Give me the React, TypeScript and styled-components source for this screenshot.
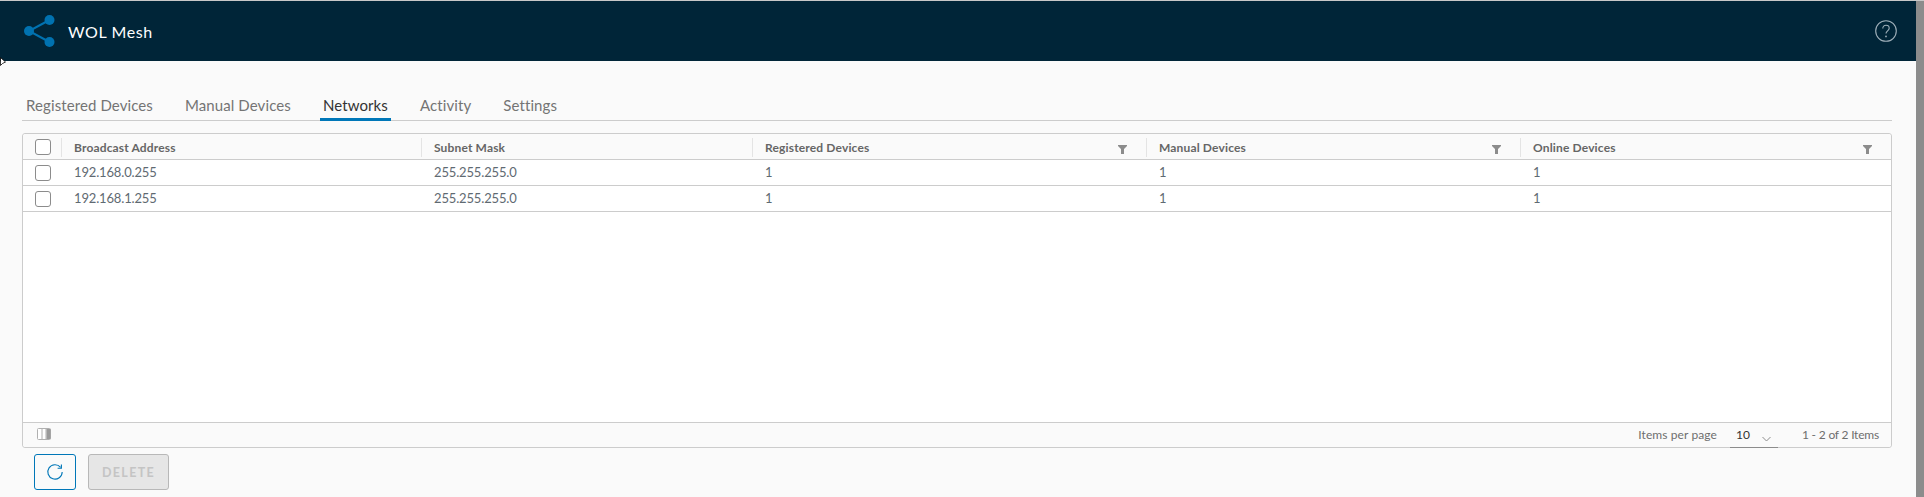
import React from 'react'
import styled, { createGlobalStyle } from 'styled-components'

const GlobalStyle = createGlobalStyle`
  html, body {
    margin: 0;
    padding: 0;
    background: #fafafa;
    overflow: hidden;
  }
  * {
    box-sizing: border-box;
  }
`

const Page = styled.div`
  position: relative;
  display: flex;
  flex-direction: column;
  width: 1924px;
  height: 497px;
  padding: 0 8px 0 0;
  background: #fafafa;
  border-top: 1px solid #c8c8c8;
  font-family: Lato, "Open Sans", sans-serif;
  color: #565656;
  box-shadow: inset -8px 0 0 #8c8c8c;
`

// HEADER

const Header = styled.header`
  display: flex;
  align-items: center;
  justify-content: space-between;
  height: 60px;
  padding: 0 19px 0 24px;
  background: #002538;
`

const Brand = styled.div`
  display: flex;
  align-items: center;
  gap: 13px;
  color: #fff;
  font-size: 16px;
  letter-spacing: 0.6px;
`

const Cursor = styled.svg`
  position: absolute;
  left: 0;
  top: 56px;
`

// TABS

const Main = styled.main`
  display: flex;
  flex-direction: column;
  padding: 0 24px 0 22px;
`

const Tabs = styled.nav`
  display: flex;
  align-items: flex-end;
  gap: 32px;
  height: 60px;
  padding-left: 4px;
  border-bottom: 1px solid #ccc;
`

const Tab = styled.div<{ $active?: boolean }>`
  height: 30px;
  margin: 0 ${p => (p.$active ? '-3px' : '0')} -1px;
  padding: 0 ${p => (p.$active ? '3px' : '0')};
  line-height: 28px;
  font-size: 15px;
  letter-spacing: 0.1px;
  color: ${p => (p.$active ? '#333' : '#747474')};
  border-bottom: 3px solid ${p => (p.$active ? '#0077b8' : 'transparent')};
`

// TABLE

const Table = styled.div`
  display: flex;
  flex-direction: column;
  height: 315px;
  margin-top: 12px;
  background: #fff;
  border: 1px solid #ccc;
  border-radius: 3px;
`

const columns = '38px 360px 331px 394px 374px 1fr'

const HeadRow = styled.div`
  display: grid;
  grid-template-columns: ${columns};
  height: 26px;
  background: #fafafa;
  border-bottom: 1px solid #ccc;
  border-radius: 3px 3px 0 0;
`

const HeadCell = styled.div`
  display: flex;
  align-items: center;
  justify-content: space-between;
  margin: 4px 0 2px;
  padding: 0 19px 0 12px;
  border-left: 1px solid #e4e4e4;
  font-size: 12px;
  font-weight: 700;
  letter-spacing: 0.15px;
  color: #666;
`

const CheckCell = styled.div`
  display: flex;
  align-items: center;
  padding-left: 12px;
`

const Checkbox = styled.span`
  display: block;
  width: 16px;
  height: 16px;
  background: #fff;
  border: 1px solid #8c8c8c;
  border-radius: 3px;
`

const Row = styled.div`
  display: grid;
  grid-template-columns: ${columns};
  height: 26px;
  border-bottom: 1px solid #ccc;
`

const Cell = styled.div`
  display: flex;
  align-items: center;
  padding: 0 0 1px 13px;
  font-size: 13px;
  letter-spacing: -0.15px;
  color: #5f6a72;
`

const Spacer = styled.div`
  flex: 1;
`

const Footer = styled.div`
  display: flex;
  align-items: flex-start;
  justify-content: space-between;
  height: 25px;
  padding: 0 12px 0 14px;
  background: #fafafa;
  border-top: 1px solid #ccc;
  border-radius: 0 0 3px 3px;
  font-size: 12px;
  line-height: 23px;
  letter-spacing: 0.1px;
  color: #6e6e6e;
`

const Pager = styled.div`
  display: flex;
  align-items: flex-start;
`

const PageSelect = styled.div`
  display: flex;
  align-items: flex-start;
  justify-content: space-between;
  width: 48px;
  height: 25px;
  margin: 0 24px 0 13px;
  padding: 0 7px 0 6px;
  border-bottom: 1px solid #8c8c8c;
  color: #333;
`

const PageRange = styled.span`
  letter-spacing: -0.2px;
`

const Chevron = styled.svg`
  margin-top: 13px;
`

const ColumnToggle = styled.svg`
  margin-top: 5px;
`

// ACTIONS

const Actions = styled.div`
  display: flex;
  gap: 12px;
  margin: 6px 0 0 12px;
`

const IconButton = styled.button`
  display: flex;
  align-items: center;
  justify-content: center;
  width: 42px;
  height: 36px;
  padding: 0;
  background: transparent;
  border: 1px solid #0077b8;
  border-radius: 3px;
`

const DisabledButton = styled.button`
  width: 81px;
  height: 36px;
  padding: 0;
  background: #e6e6e6;
  border: 1px solid #b8b8b8;
  border-radius: 3px;
  font-family: inherit;
  font-size: 12.5px;
  font-weight: 700;
  letter-spacing: 1.3px;
  color: #c4c4c4;
`

const FilterMark = styled.svg`
  flex: none;
  margin-top: 4px;
`

const ShareIcon = () => (
  <svg width="31" height="32" viewBox="0 0 31 32">
    <path d="M25.5 5 5 16l20.5 11" fill="none" stroke="#0072b0" strokeWidth="2" />
    <circle cx="25.5" cy="5" r="5" fill="#0072b0" />
    <circle cx="5" cy="16" r="5" fill="#0072b0" />
    <circle cx="25.5" cy="27" r="5" fill="#0072b0" />
  </svg>
)

const HelpIcon = () => (
  <svg width="22" height="22" viewBox="0 0 22 22">
    <circle cx="11" cy="11" r="10.3" fill="none" stroke="#9fb0ba" strokeWidth="1.1" />
    <path d="M7.8 8.4c0-2 1.4-3.1 3.2-3.1s3.2 1.1 3.2 2.9c0 2.5-3.2 2.7-3.2 5.2" fill="none" stroke="#9fb0ba" strokeWidth="1.1" />
    <circle cx="11" cy="16.4" r="0.9" fill="#9fb0ba" />
  </svg>
)

const FilterIcon = () => (
  <FilterMark width="9" height="9" viewBox="0 0 9 9">
    <path d="M0 0h9v1L6 4v5H3V4L0 1z" fill="#8c8c8c" />
  </FilterMark>
)

const ColumnsIcon = () => (
  <ColumnToggle width="14" height="12" viewBox="0 0 14 12">
    <rect x="0.5" y="0.5" width="13" height="11" rx="1" fill="#fff" stroke="#b0b0b0" />
    <path d="M5 1v10M9 1v10" stroke="#b0b0b0" />
    <rect x="9.5" y="1" width="4" height="10" fill="#9a9a9a" />
  </ColumnToggle>
)

const RefreshIcon = () => (
  <svg width="18" height="18" viewBox="0 0 18 18">
    <path d="M14.6 4.4A7.2 7.2 0 1 0 16.2 9" fill="none" stroke="#0077b8" strokeWidth="1.1" />
    <path d="M15.4 1.4v3.8h-3.8" fill="none" stroke="#0077b8" strokeWidth="1.1" />
  </svg>
)

const ChevronIcon = () => (
  <Chevron width="9" height="6" viewBox="0 0 9 6">
    <path d="M.5 1l4 4 4-4" fill="none" stroke="#8c8c8c" strokeWidth="1" />
  </Chevron>
)

const rows = [
  { address: '192.168.0.255', mask: '255.255.255.0' },
  { address: '192.168.1.255', mask: '255.255.255.0' },
]

const tabNames = ['Registered Devices', 'Manual Devices', 'Networks', 'Activity', 'Settings']

export default function App() {
  return (
    <Page>
      <GlobalStyle />
      <Header>
        <Brand>
          <ShareIcon />
          WOL Mesh
        </Brand>
        <HelpIcon />
      </Header>
      <Cursor width="7" height="10" viewBox="0 0 7 10">
        <path d="M.5.5v8l2-2 3-1.5z" fill="#fff" stroke="#000" strokeWidth=".8" />
      </Cursor>
      <Main>
        <Tabs>
          {tabNames.map(name => (
            <Tab key={name} $active={name === 'Networks'}>{name}</Tab>
          ))}
        </Tabs>
        <Table>
          <HeadRow>
            <CheckCell><Checkbox /></CheckCell>
            <HeadCell>Broadcast Address</HeadCell>
            <HeadCell>Subnet Mask</HeadCell>
            <HeadCell>Registered Devices<FilterIcon /></HeadCell>
            <HeadCell>Manual Devices<FilterIcon /></HeadCell>
            <HeadCell>Online Devices<FilterIcon /></HeadCell>
          </HeadRow>
          {rows.map(row => (
            <Row key={row.address}>
              <CheckCell><Checkbox /></CheckCell>
              <Cell>{row.address}</Cell>
              <Cell>{row.mask}</Cell>
              <Cell>1</Cell>
              <Cell>1</Cell>
              <Cell>1</Cell>
            </Row>
          ))}
          <Spacer />
          <Footer>
            <ColumnsIcon />
            <Pager>
              Items per page
              <PageSelect>10<ChevronIcon /></PageSelect>
              <PageRange>1 - 2 of 2 Items</PageRange>
            </Pager>
          </Footer>
        </Table>
        <Actions>
          <IconButton><RefreshIcon /></IconButton>
          <DisabledButton>DELETE</DisabledButton>
        </Actions>
      </Main>
    </Page>
  )
}
